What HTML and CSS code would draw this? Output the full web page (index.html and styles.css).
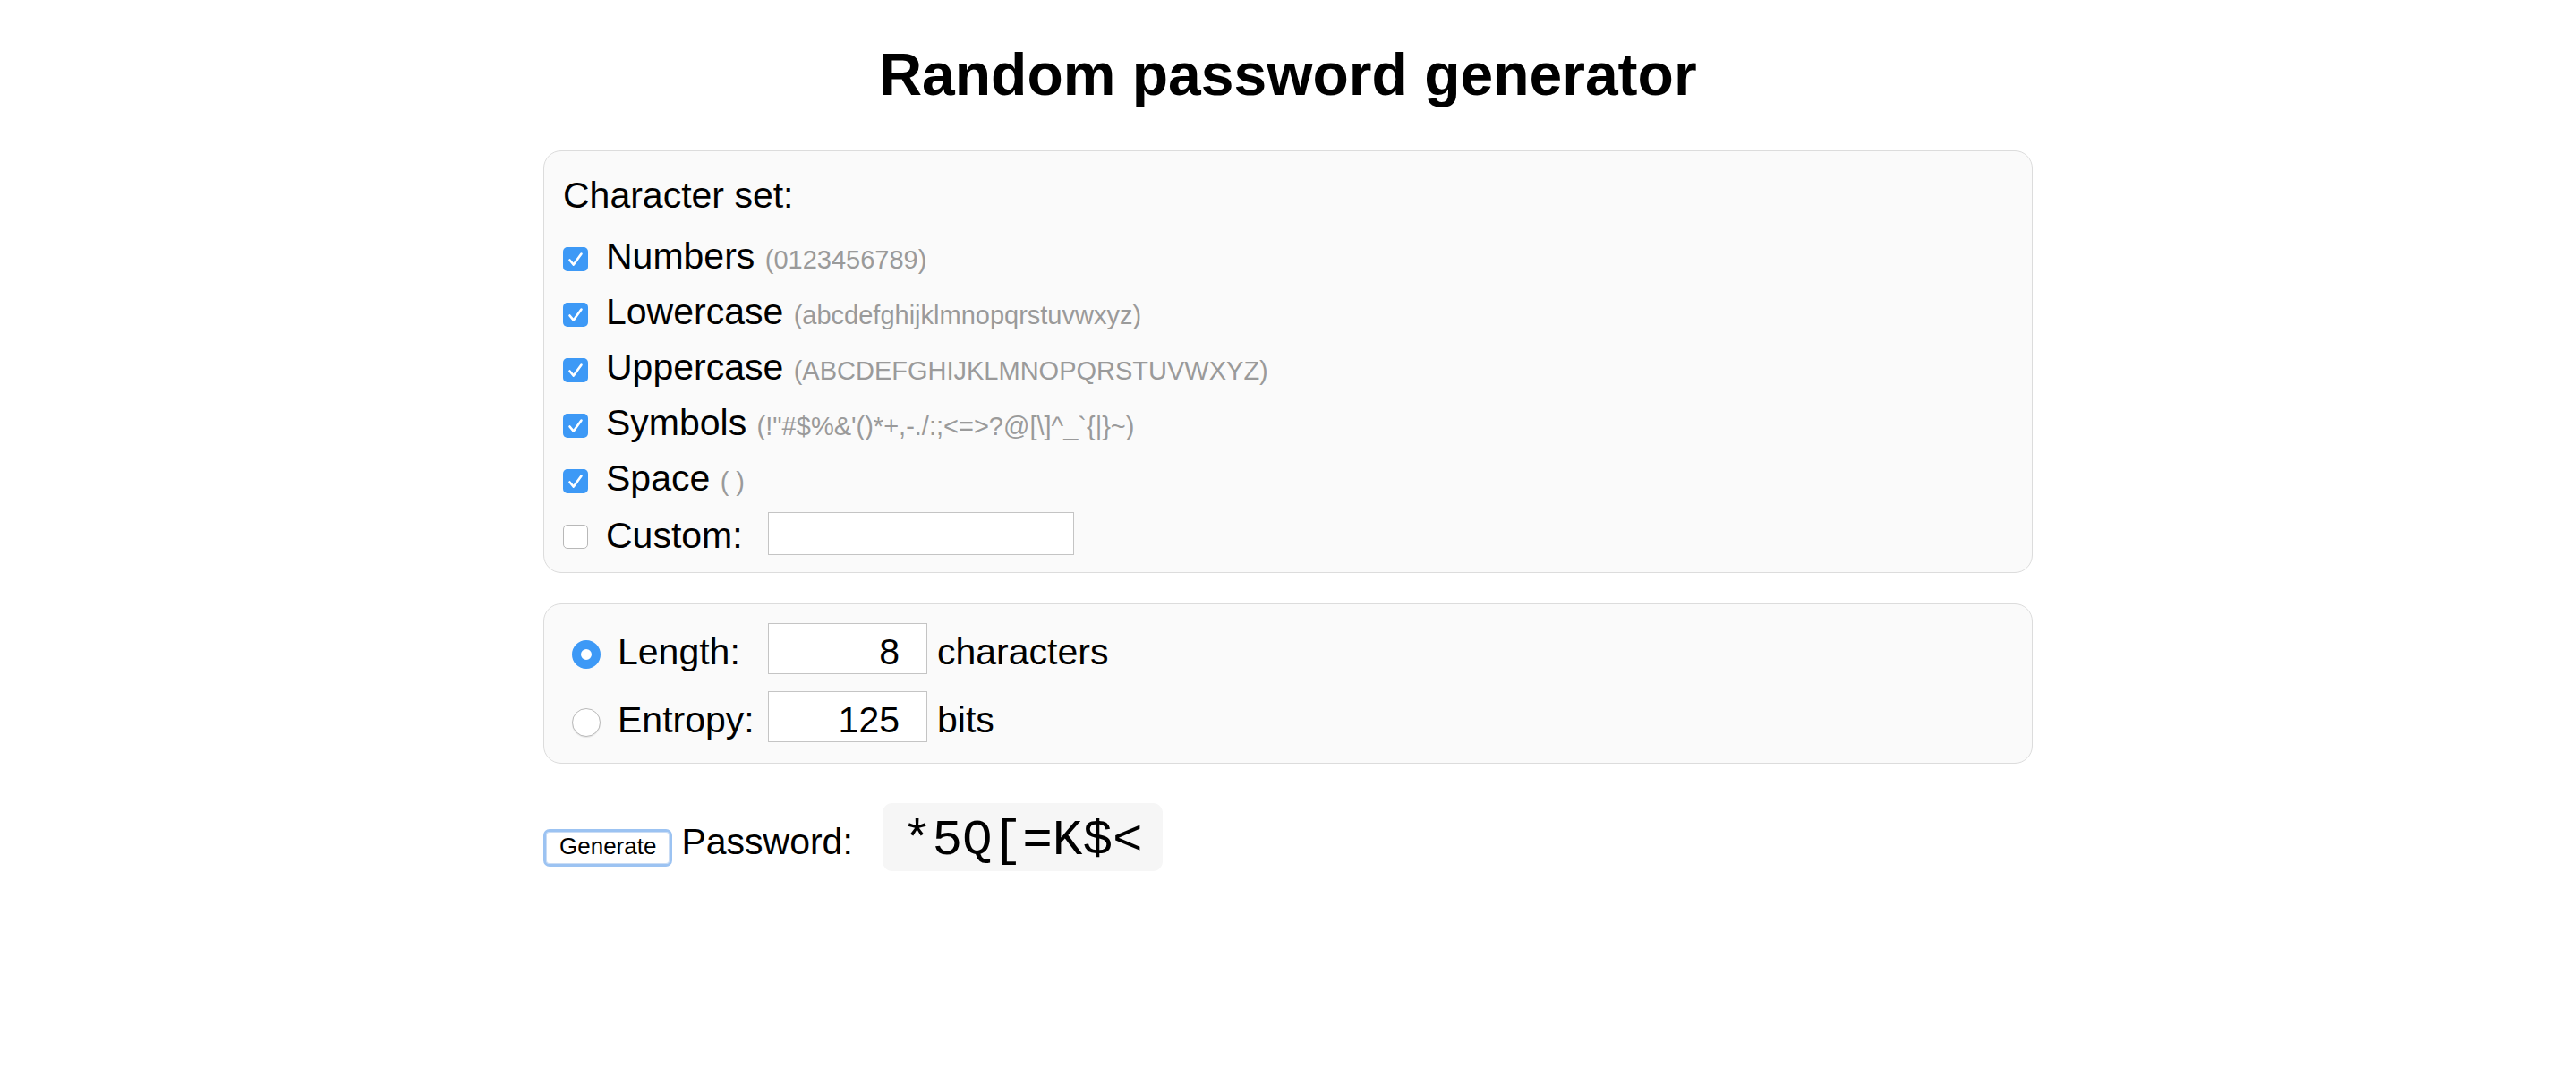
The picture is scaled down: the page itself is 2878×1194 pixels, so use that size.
FILE: index.html
```html
<!DOCTYPE html>
<html lang="en">
<head>
<meta charset="utf-8">
<title>Random password generator</title>
<link rel="stylesheet" href="styles.css">
</head>
<body>
<h1 class="title">Random password generator</h1>
<main class="page">
  <section class="panel charset">
    <div class="panel-heading">Character set:</div>
    <div class="option">
      <span class="check on"><svg viewBox="0 0 28 27"><path d="M7.5 14.5 L11.8 19.6 L20.5 7.5"/></svg></span>
      <span class="label">Numbers <span class="hint">(0123456789)</span></span>
    </div>
    <div class="option">
      <span class="check on"><svg viewBox="0 0 28 27"><path d="M7.5 14.5 L11.8 19.6 L20.5 7.5"/></svg></span>
      <span class="label">Lowercase <span class="hint">(abcdefghijklmnopqrstuvwxyz)</span></span>
    </div>
    <div class="option">
      <span class="check on"><svg viewBox="0 0 28 27"><path d="M7.5 14.5 L11.8 19.6 L20.5 7.5"/></svg></span>
      <span class="label">Uppercase <span class="hint">(ABCDEFGHIJKLMNOPQRSTUVWXYZ)</span></span>
    </div>
    <div class="option">
      <span class="check on"><svg viewBox="0 0 28 27"><path d="M7.5 14.5 L11.8 19.6 L20.5 7.5"/></svg></span>
      <span class="label">Symbols <span class="hint">(!"#$%&amp;'()*+,-./:;&lt;=&gt;?@[\]^_`{|}~)</span></span>
    </div>
    <div class="option">
      <span class="check on"><svg viewBox="0 0 28 27"><path d="M7.5 14.5 L11.8 19.6 L20.5 7.5"/></svg></span>
      <span class="label">Space <span class="hint">( )</span></span>
    </div>
    <div class="option">
      <span class="check"></span>
      <span class="label">Custom:</span>
      <input class="custom-input" type="text" value="">
    </div>
  </section>

  <section class="panel length">
    <div class="choice-grid">
      <span class="radio on"></span>
      <span class="label">Length:</span>
      <input class="num" type="text" value="8">
      <span class="label unit">characters</span>

      <span class="radio"></span>
      <span class="label">Entropy:</span>
      <input class="num" type="text" value="125">
      <span class="label unit">bits</span>
    </div>
  </section>

  <div class="actions">
    <button class="generate" type="button">Generate</button>
    <span class="label pw-label">Password:</span>
    <code class="password">*5Q[=K$&lt;</code>
  </div>
</main>
</body>
</html>
```

FILE: styles.css
```css
html, body {
  margin: 0;
  padding: 0;
  background: #ffffff;
}

body {
  font-family: "Liberation Sans", Arial, Helvetica, sans-serif;
  font-size: 41px;
  color: #000000;
}

.title {
  margin: 45px 0 0;
  font-size: 66px;
  line-height: 76px;
  font-weight: bold;
  text-align: center;
}

.page {
  width: 1664px;
  margin: 47px auto 0;
}

.panel {
  box-sizing: border-box;
  border: 1px solid #dcdcdc;
  border-radius: 20px;
  background: #fafafa;
}

.charset {
  padding: 25px 21px 15px;
}

.panel-heading {
  line-height: 48px;
  margin-bottom: 10px;
}

.option {
  display: flex;
  align-items: center;
  height: 62px;
}

.label {
  line-height: 47px;
  white-space: nowrap;
}

.option .label {
  margin-top: 10px;
}

.hint {
  font-size: 29px;
  color: #9a9a9a;
}

.check {
  box-sizing: border-box;
  display: flex;
  flex: none;
  width: 28px;
  height: 27px;
  margin: 13px 20px 0 0;
  border: 1px solid #b8b8b8;
  border-radius: 5px;
  background: #ffffff;
}

.check.on {
  border: none;
  background: #3d99f6;
}

.check svg {
  width: 28px;
  height: 27px;
  fill: none;
  stroke: #ffffff;
  stroke-width: 2.6;
  stroke-linecap: round;
  stroke-linejoin: round;
}

.custom-input {
  box-sizing: border-box;
  width: 342px;
  height: 48px;
  margin: 6px 0 0 28px;
  padding: 0 6px;
  border: 1px solid #c4c4c4;
  background: #ffffff;
  font: inherit;
}

.length {
  margin-top: 34px;
  padding: 21px 31px 23px;
}

.choice-grid {
  display: grid;
  grid-template-columns: 51px 168px 178px auto;
  grid-auto-rows: 57px;
  row-gap: 19px;
  align-items: center;
}

.choice-grid .label {
  margin-top: 8px;
}

.radio {
  box-sizing: border-box;
  width: 32px;
  height: 32px;
  margin-top: 13px;
  border: 1px solid #b9b9b9;
  border-radius: 50%;
  background: #ffffff;
  box-shadow: 0 1px 1px rgba(0, 0, 0, 0.08);
}

.radio.on {
  border: 10px solid #3d99f6;
  box-shadow: none;
}

.num {
  box-sizing: border-box;
  width: 178px;
  height: 57px;
  padding: 8px 30px 0 0;
  border: 1px solid #c4c4c4;
  background: #ffffff;
  font: inherit;
  color: #000000;
  text-align: right;
}

.unit {
  padding-left: 11px;
}

.actions {
  display: flex;
  align-items: baseline;
  margin-top: 44px;
}

.generate {
  font-family: "Liberation Sans", Arial, Helvetica, sans-serif;
  font-size: 26px;
  line-height: 32px;
  padding: 0 15px 4px;
  border: 3px solid #9cc3f2;
  border-radius: 7px;
  background: #ffffff;
  color: #000000;
  box-shadow: inset 0 0 0 1px #c9dcf5;
}

.pw-label {
  margin: 0 33px 0 10px;
}

.password {
  font-family: "Liberation Mono", "Courier New", monospace;
  font-size: 56px;
  line-height: 60px;
  padding: 12px 22px 4px;
  border-radius: 11px;
  background: #f6f6f6;
  white-space: pre;
}
```
